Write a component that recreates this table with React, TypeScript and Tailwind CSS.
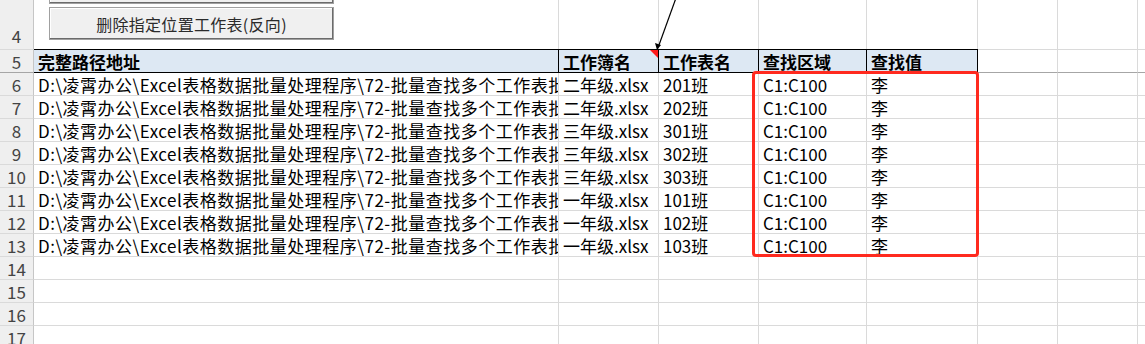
import React from "react";

const PATH = "D:\\凌霄办公\\Excel表格数据批量处理程序\\72-批量查找多个工作表批";

const rows = [
  { n: 6, book: "二年级.xlsx", sheet: "201班" },
  { n: 7, book: "二年级.xlsx", sheet: "202班" },
  { n: 8, book: "三年级.xlsx", sheet: "301班" },
  { n: 9, book: "三年级.xlsx", sheet: "302班" },
  { n: 10, book: "三年级.xlsx", sheet: "303班" },
  { n: 11, book: "一年级.xlsx", sheet: "101班" },
  { n: 12, book: "一年级.xlsx", sheet: "102班" },
  { n: 13, book: "一年级.xlsx", sheet: "103班" },
];

// column widths incl. right border
const cols = ["w-[525px]", "w-[100px]", "w-[100px]", "w-[108px]", "w-[111px]", "w-[80px]", "w-[80px]"];

const font = { fontFamily: '"Noto Sans CJK SC", "Liberation Sans", sans-serif' };

function RowNum({ n }: { n?: number }) {
  return (
    <div className="w-[34px] shrink-0 h-[23px] bg-[#efefef] border-r border-[#c6c6c6] border-b border-b-[#dadada] text-[#444] text-[17px] leading-[24px] overflow-hidden flex justify-center">
      {n}
    </div>
  );
}

function Cell({ w, children, className = "" }: { w: string; children?: React.ReactNode; className?: string }) {
  return (
    <div
      className={`${w} shrink-0 h-[23px] border-r border-b border-[#dadada] px-[4px] text-[17px] leading-[24px] text-black whitespace-nowrap overflow-hidden ${className}`}
    >
      {children}
    </div>
  );
}

function BlankRow({ n }: { n: number }) {
  return (
    <div className="flex">
      <RowNum n={n} />
      {cols.map((c, i) => (
        <Cell key={i} w={c} />
      ))}
      <div className="flex-1 h-[23px] border-b border-[#dadada]" />
    </div>
  );
}

export default function App() {
  const headers = ["完整路径地址", "工作簿名", "工作表名", "查找区域", "查找值"];

  return (
    <div className="relative w-[1145px] h-[344px] overflow-hidden bg-white" style={font}>
      {/* row 4 (tall) */}
      <div className="flex h-[49px]">
        <div className="w-[34px] shrink-0 bg-[#efefef] border-r border-[#c6c6c6] text-[#444] text-[17px] flex items-end justify-center pb-[1px]">
          4
        </div>
        {cols.map((c, i) => (
          <div key={i} className={`${c} shrink-0 h-[49px] border-r border-[#dadada]`} />
        ))}
        <div className="flex-1" />
      </div>

      {/* row 5 header */}
      <div className="flex h-[24px]">
        <div className="w-[34px] shrink-0 bg-[#efefef] border-r border-[#c6c6c6] border-t border-t-[#dadada] border-b border-b-[#a6a6a6] text-[#444] text-[17px] flex justify-center leading-[23px]">
          5
        </div>
        {headers.map((h, i) => (
          <div
            key={h}
            className={`${cols[i]} shrink-0 h-[24px] relative bg-[#dde8f3] border-t border-b border-r border-black px-[4px] text-[17px] font-bold leading-[24px] text-black whitespace-nowrap`}
          >
            {h}
            {i === 1 && (
              <span className="absolute right-0 top-0 w-0 h-0 border-t-[8px] border-t-[#ff1a1a] border-l-[8px] border-l-transparent" />
            )}
          </div>
        ))}
        <div className="w-[80px] shrink-0 h-[24px] border-t border-t-[#dadada] border-r border-r-[#dadada] border-b border-b-[#a6a6a6]" />
        <div className="w-[80px] shrink-0 h-[24px] border-t border-t-[#dadada] border-r border-r-[#dadada] border-b border-b-[#a6a6a6]" />
        <div className="flex-1 h-[24px] border-t border-t-[#dadada] border-b border-b-[#a6a6a6]" />
      </div>

      {/* data rows */}
      {rows.map((r) => (
        <div key={r.n} className="flex">
          <RowNum n={r.n} />
          <Cell w={cols[0]} className="tracking-[0.5px]">{PATH}</Cell>
          <Cell w={cols[1]}>{r.book}</Cell>
          <Cell w={cols[2]}>{r.sheet}</Cell>
          <Cell w={cols[3]}>C1:C100</Cell>
          <Cell w={cols[4]}>李</Cell>
          <Cell w={cols[5]} />
          <Cell w={cols[6]} />
          <div className="flex-1 h-[23px] border-b border-[#dadada]" />
        </div>
      ))}

      {[14, 15, 16, 17].map((n) => (
        <BlankRow key={n} n={n} />
      ))}

      {/* form buttons */}
      <div className="absolute left-[49px] top-[-28px] w-[285px] h-[32px] bg-[#f0f0f0] border border-[#a0a0a0] shadow-[inset_-1px_-1px_0_#6b6b6b,inset_1px_1px_0_#ffffff]" />
      <div className="absolute left-[49px] top-[7px] w-[285px] h-[33px] bg-[#f0f0f0] border border-[#a0a0a0] shadow-[inset_-1px_-1px_0_#6b6b6b,inset_1px_1px_0_#ffffff] flex items-center justify-center text-[16px] text-[#2b2b2b] tracking-[0.3px]">
        删除指定位置工作表(反向)
      </div>

      {/* comment arrow */}
      <svg className="absolute left-0 top-0 pointer-events-none" width="1145" height="60">
        <line x1="676" y1="-2" x2="659" y2="45" stroke="#000" strokeWidth="1.2" />
        <polygon points="657,50 655,43 661,45" fill="#000" />
      </svg>

      {/* highlight box */}
      <div className="absolute left-[752px] top-[71px] w-[227px] h-[186px] border-[3px] border-[#ff2a1f] rounded-[4px] pointer-events-none" />
    </div>
  );
}
